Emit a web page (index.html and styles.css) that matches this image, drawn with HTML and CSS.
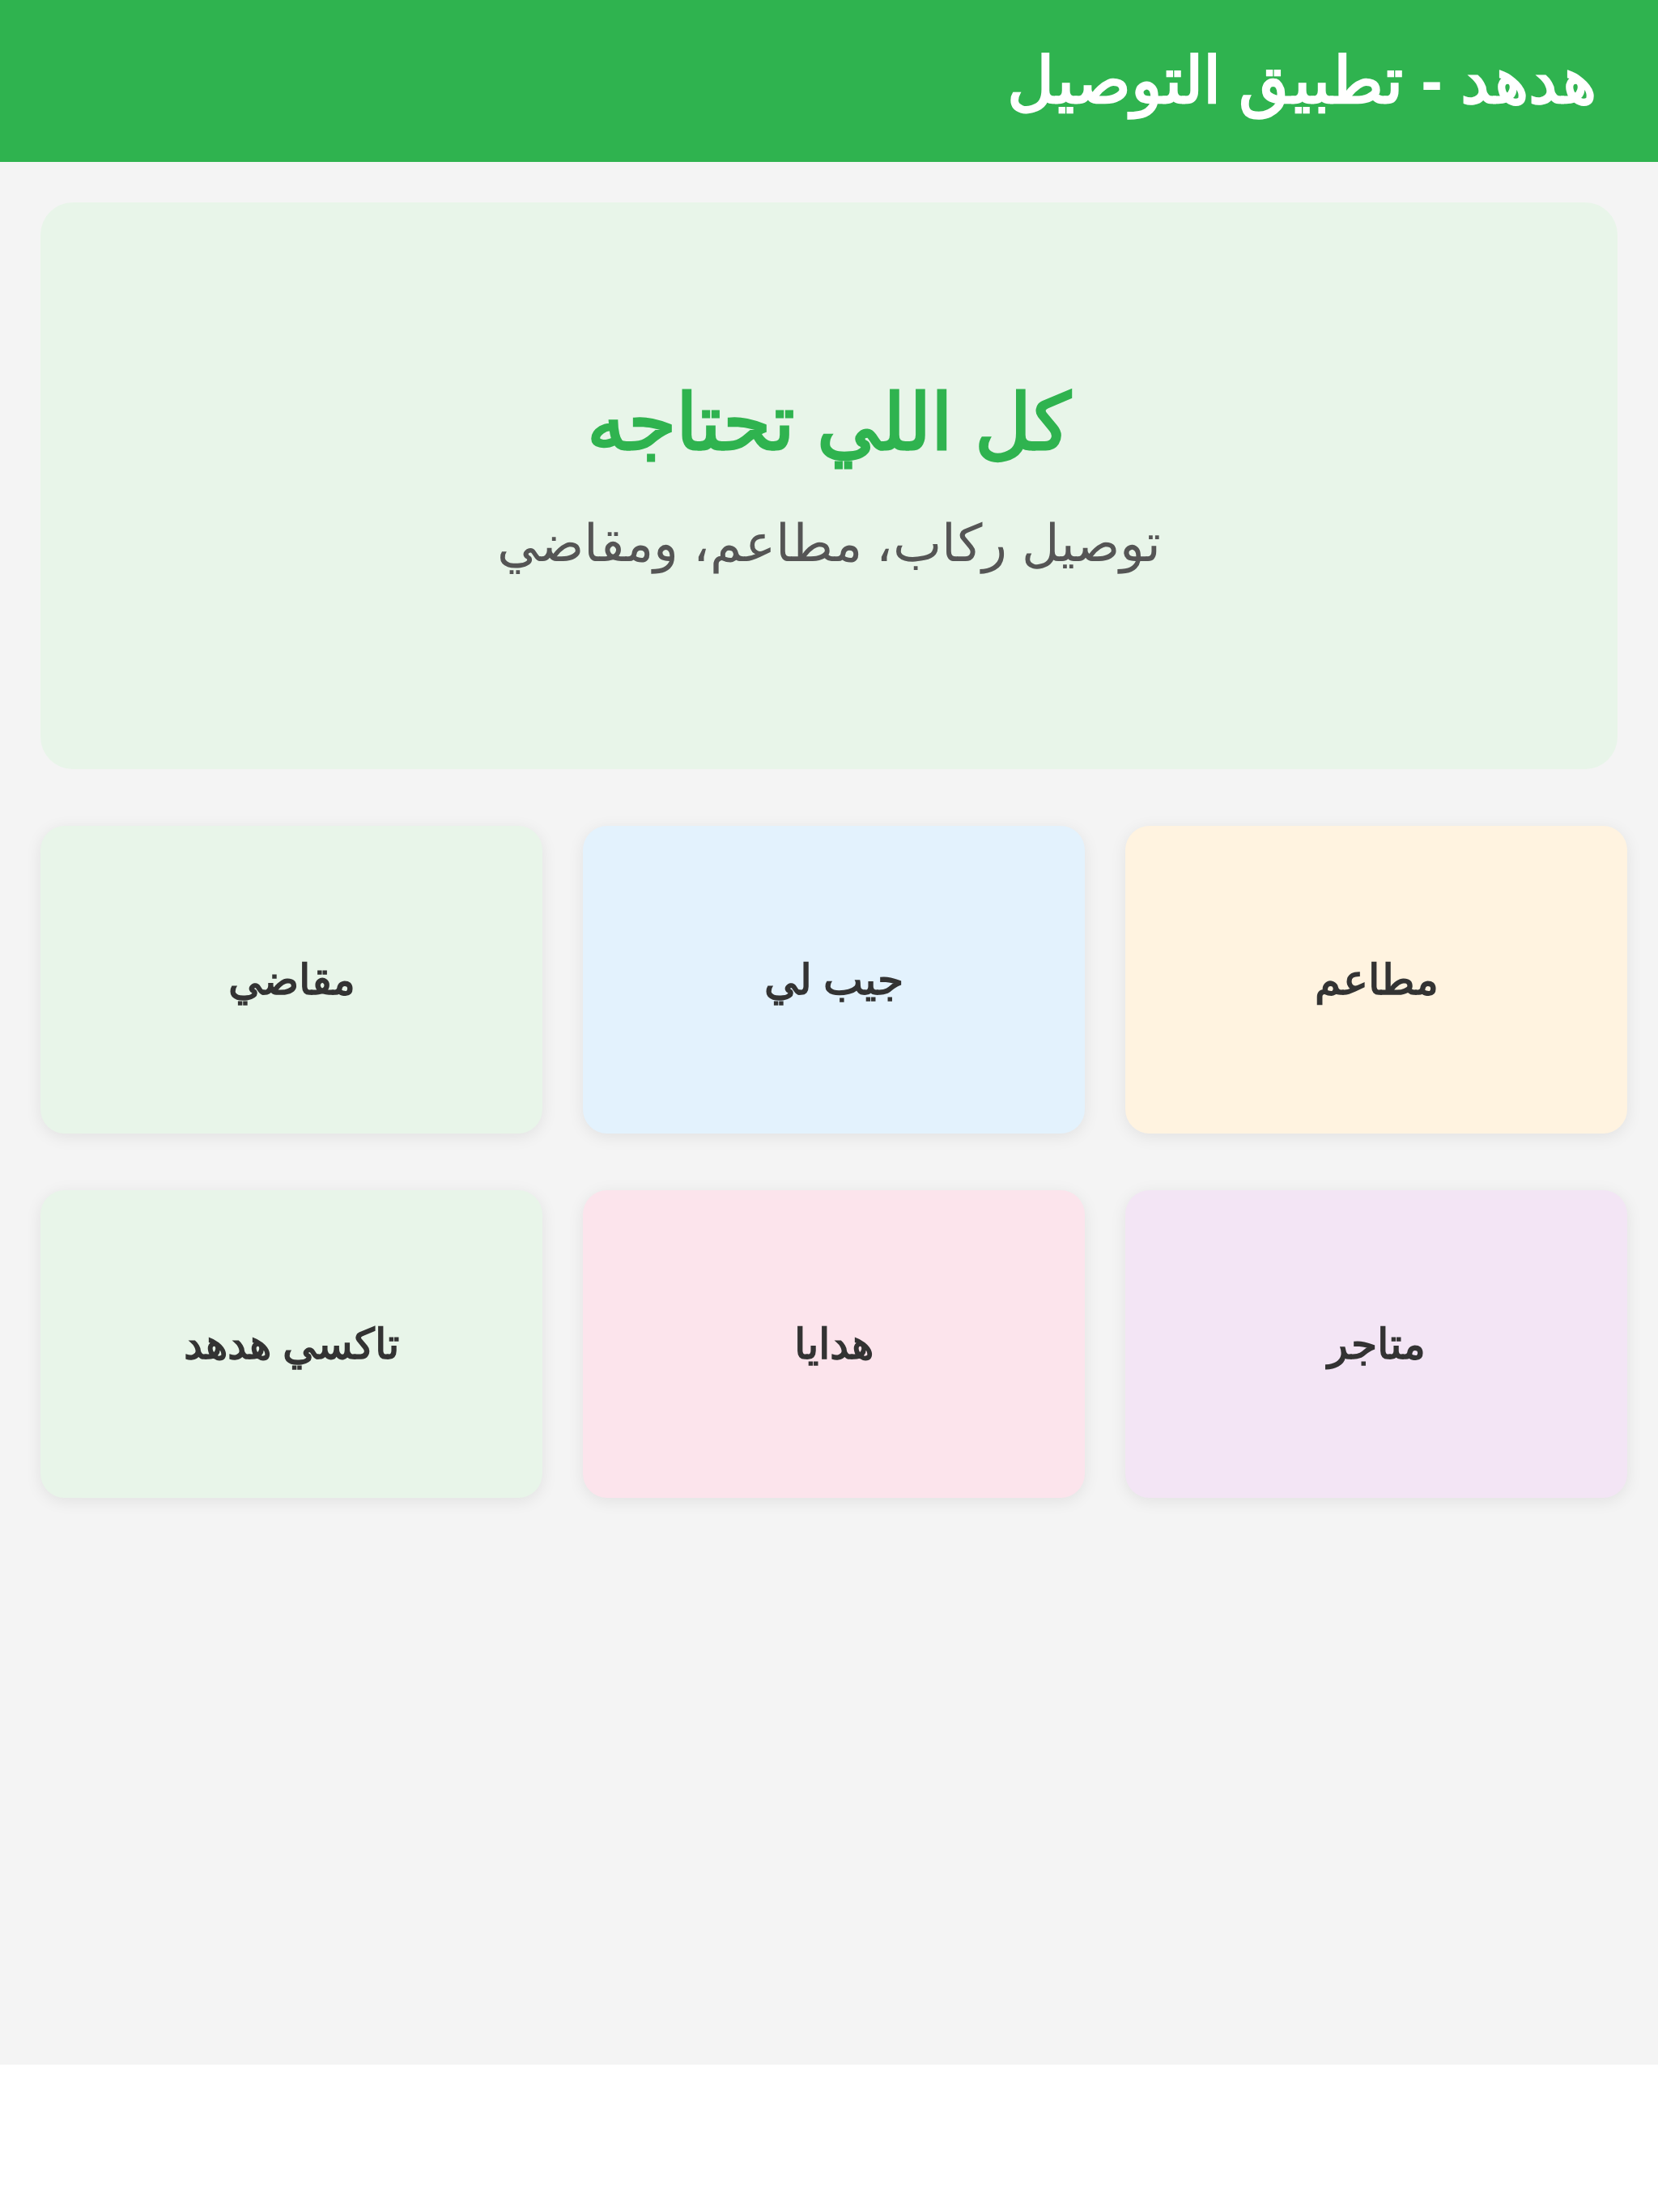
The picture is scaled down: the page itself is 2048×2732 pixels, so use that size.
FILE: index.html
```html
<!DOCTYPE html>
<html lang="ar" dir="rtl">
<head>
<meta charset="utf-8">
<title>هدهد - تطبيق التوصيل</title>
<link rel="stylesheet" href="styles.css">
</head>
<body>
<div class="app">
  <header class="topbar">
    <h1 class="brand">هدهد - تطبيق التوصيل</h1>
  </header>
  <main class="content">
    <section class="hero">
      <h2 class="hero-title">كل اللي تحتاجه</h2>
      <p class="hero-sub">توصيل ركاب، مطاعم، ومقاضي</p>
    </section>
    <section class="services">
      <div class="card card-orange">مطاعم</div>
      <div class="card card-blue">جيب لي</div>
      <div class="card card-green">مقاضي</div>
      <div class="card card-purple">متاجر</div>
      <div class="card card-pink">هدايا</div>
      <div class="card card-green">تاكسي هدهد</div>
    </section>
  </main>
</div>
</body>
</html>
```

FILE: styles.css
```css
html {
  background: #ffffff;
}
body {
  margin: 0;
  font-family: "Liberation Sans", Arial, sans-serif;
  color: #333333;
}
.app {
  background: #f4f4f4;
  height: 2550px;
}
.topbar {
  background: #2fb34f;
  height: 200px;
  display: flex;
  align-items: center;
  padding: 0 76px;
  box-sizing: border-box;
}
.brand {
  margin: 0;
  color: #ffffff;
  font-size: 80px;
  font-weight: bold;
  line-height: 1;
}
.content {
  padding: 50px;
}
.hero {
  background: #e8f5e9;
  border-radius: 40px;
  height: 700px;
  padding-bottom: 26px;
  box-sizing: border-box;
  display: flex;
  flex-direction: column;
  align-items: center;
  justify-content: center;
  text-align: center;
}
.hero-title {
  margin: 0;
  color: #2fb34f;
  font-size: 96px;
  font-weight: bold;
  line-height: 1.2;
}
.hero-sub {
  margin: 54px 0 0;
  color: #555555;
  font-size: 64px;
  line-height: 1.2;
}
.services {
  margin-top: 70px;
  display: grid;
  grid-template-columns: repeat(3, 620px);
  grid-auto-rows: 380px;
  column-gap: 50px;
  row-gap: 70px;
  justify-content: end;
}
.card {
  border-radius: 30px;
  box-shadow: 0 4px 20px rgba(0, 0, 0, 0.08);
  display: flex;
  align-items: center;
  justify-content: center;
  font-size: 52px;
  font-weight: bold;
  color: #333333;
}
.card-orange { background: #fff3e0; }
.card-blue { background: #e3f2fd; }
.card-green { background: #e8f5e9; }
.card-purple { background: #f3e5f5; }
.card-pink { background: #fce4ec; }
```
